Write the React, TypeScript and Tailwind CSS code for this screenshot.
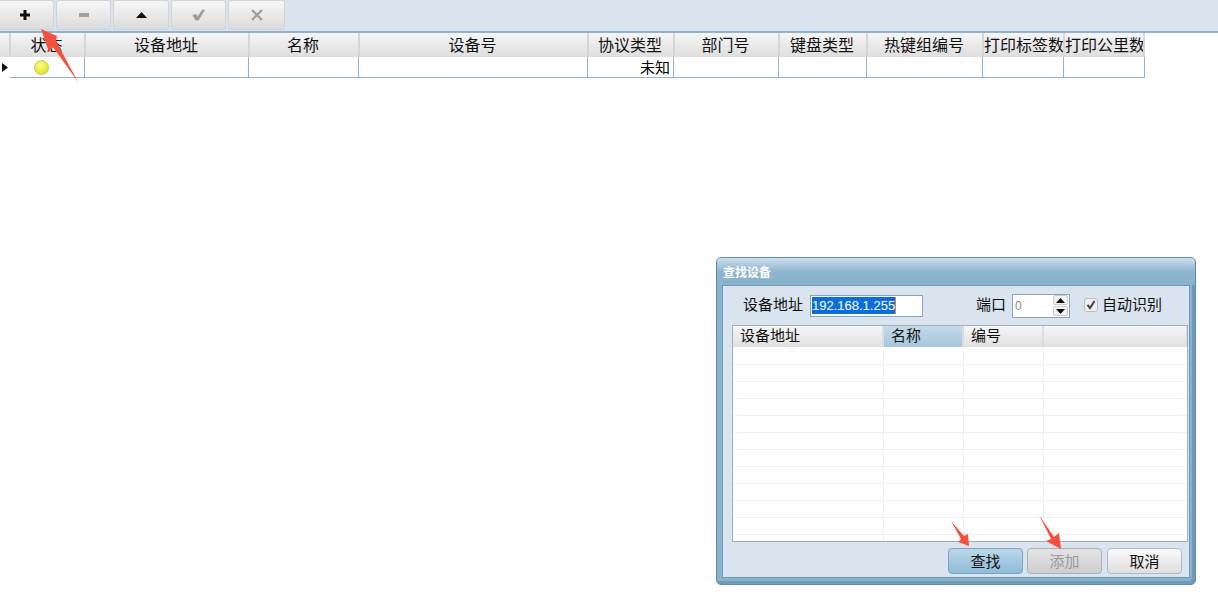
import React from "react";

const cols: [string, number][] = [
  ["状态", 75], ["设备地址", 164], ["名称", 110], ["设备号", 229], ["协议类型", 86],
  ["部门号", 105], ["键盘类型", 88], ["热键组编号", 116], ["打印标签数", 81], ["打印公里数", 81],
];
const font = { fontFamily: '"Noto Sans CJK SC", "Liberation Sans", sans-serif' };

function ToolBtn({ w, first, children }: { w: number; first?: boolean; children?: React.ReactNode }) {
  return (
    <div style={{ width: w }} className={(first ? "-ml-[4px] " : "") + "h-[30px] shrink-0 rounded-[3px] border border-[#d2d5d8] bg-gradient-to-b from-[#f6f6f6] to-[#dcdcdc] flex items-center justify-center"}>
      {children}
    </div>
  );
}

export default function App() {
  const gridCols = [151, 80, 80, 144];
  return (
    <div style={font} className="relative w-[1218px] h-[602px] bg-white overflow-hidden text-black">
      <div className="h-[33px] bg-[#d9e4ee] border-b-[2px] border-[#8fb4d0]">
        <div className="flex gap-[2px]">
          <ToolBtn w={58} first>
            <svg width="12" height="12" viewBox="0 0 12 12"><path d="M4.500 1h3v3.500h3.500v3h-3.500v3.500h-3v-3.500h-3.500v-3h3.500z" fill="#111" /></svg>
          </ToolBtn>
          <ToolBtn w={55}>
            <svg width="10" height="4" viewBox="0 0 10 4"><rect width="10" height="4" fill="#a0a0a0" /></svg>
          </ToolBtn>
          <ToolBtn w={56}>
            <svg width="11" height="6" viewBox="0 0 11 6"><path d="M5.500 0l5.500 6h-11z" fill="#111" /></svg>
          </ToolBtn>
          <ToolBtn w={55}>
            <svg width="13" height="12" viewBox="0 0 13 12"><path d="M0.500 6L4 5L5.500 7.500L10.500 0.500L13 1L6.500 11.500L3.500 11.500Z" fill="#9c9c9c" /></svg>
          </ToolBtn>
          <ToolBtn w={57}>
            <svg width="12" height="12" viewBox="0 0 12 12"><path d="M1 1l10 10m0-10l-10 10" stroke="#9c9c9c" strokeWidth="2.200" /></svg>
          </ToolBtn>
        </div>
      </div>

      <div className="flex h-[24px]">
        <div className="w-[11px] bg-gradient-to-b from-[#f6f6f6] to-[#dedede] border-r-2 border-[#d6d6d6]" />
        {cols.map(([t, w], i) => (
          <div key={t} style={{ width: i === 9 ? w - 1 : w }} className="shrink-0 pr-[2px] bg-gradient-to-b from-[#f6f6f6] to-[#dedede] border-r-2 border-[#d6d6d6] text-[16px] leading-[22px] text-center whitespace-nowrap overflow-hidden text-[#111]">
            {t}
          </div>
        ))}
      </div>
      <div className="flex h-[21px]">
        <div className="w-[10px] flex items-center pl-[2px]">
          <svg width="6" height="9" viewBox="0 0 6 9"><path d="M0 0l6 4.500-6 4.500z" fill="#111" /></svg>
        </div>
        {cols.map(([t, w], i) => (
          <div key={t} style={{ width: w }} className="shrink-0 box-border border-r border-b border-[#8fb4d0] first:border-l text-[15px] leading-[20px] whitespace-nowrap flex items-center justify-end pr-[3px]">
            {i === 0 && (
              <span className="ml-[24px] mr-auto w-[15px] h-[15px] rounded-full bg-[radial-gradient(circle_at_40%_35%,#f8fc80,#e4eb35_65%,#b0b42c)] border border-[#c4c75a]" />
            )}
            {i === 4 && "未知"}
          </div>
        ))}
      </div>

      {/* dialog */}
      <div className="absolute left-[716px] top-[257px] w-[480px] h-[328px] rounded-[5px] border border-[#5f8cae] bg-[#8ab2cc] shadow-[inset_-3px_-3px_0_#6f9aba] flex flex-col px-[5px] pb-[6px]">
        <div className="h-[27px] -mx-[5px] px-[6px] rounded-t-[4px] bg-gradient-to-b from-[#cfe0ec] via-[#8fb5ce] to-[#8ab2cc] text-white text-[12px] font-bold leading-[28px]">
          查找设备
        </div>
        <div className="flex-1 bg-[#d9e4ee] border border-[#6f9aba] flex flex-col pl-[9px] pr-[1px]">
          <div className="h-[39px] flex items-center text-[15px] text-[#111] shrink-0">
            <span className="ml-[11px] w-[67px] whitespace-nowrap mb-[3px]">设备地址</span>
            <div className="w-[113px] h-[22px] bg-white border border-[#8aa4b8] flex items-center pl-[1px]">
              <span className="bg-[#0a6fd8] text-white text-[13px] leading-[17px] border-r border-[#f08020]" style={{ fontFamily: '"Liberation Sans", sans-serif' }}>192.168.1.255</span>
            </div>
            <span className="ml-[53px] w-[36px] whitespace-nowrap mb-[3px]">端口</span>
            <div className="w-[58px] h-[24px] bg-white border border-[#8aa4b8] flex items-center justify-between pl-[2px] pr-[1px]">
              <span className="text-[12px] text-[#888]" style={{ fontFamily: '"Liberation Sans", sans-serif' }}>0</span>
              <div className="w-[15px] h-[21px] flex flex-col gap-px">
                <div className="flex-1 rounded-[2px] border border-[#ccc] bg-[#f2f2f2] flex items-center justify-center"><svg width="9" height="5" viewBox="0 0 9 5"><path d="M4.500 0l4.500 5h-9z" fill="#111" /></svg></div>
                <div className="flex-1 rounded-[2px] border border-[#ccc] bg-[#f2f2f2] flex items-center justify-center"><svg width="9" height="5" viewBox="0 0 9 5"><path d="M0 0h9l-4.500 5z" fill="#111" /></svg></div>
              </div>
            </div>
            <div className="ml-[14px] mb-[2px] w-[14px] h-[14px] rounded-[3px] border border-[#bbb] bg-[#eeeeee] flex items-center justify-center">
              <svg width="10" height="10" viewBox="0 0 10 10"><path d="M1.500 5l2.500 3 4.500-7" stroke="#444" strokeWidth="2" fill="none" /></svg>
            </div>
            <span className="ml-[5px] -translate-x-px whitespace-nowrap mb-[3px]">自动识别</span>
          </div>
          <div className="h-[217px] bg-white border border-[#9fb0bd] shrink-0 flex flex-col overflow-hidden">
            <div className="flex h-[21px] shrink-0">
              {["设备地址", "名称", "编号", ""].map((t, i) => (
                <div key={i} style={{ width: gridCols[i] }} className={"shrink-0 pl-[7px] text-[15px] leading-[18px] text-[#111] border-r-2 border-[#dcdcdc] " + (i === 1 ? "bg-gradient-to-b from-[#c4dbe9] to-[#a4c6da]" : "bg-gradient-to-b from-[#f6f6f6] to-[#e0e0e0]")}>
                  {t}
                </div>
              ))}
            </div>
            <div className="flex-1 pt-[1px] overflow-hidden">
              {Array.from({ length: 12 }).map((_, r) => (
                <div key={r} className="flex h-[17px]">
                  {gridCols.map((w, i) => (
                    <div key={i} style={{ width: w }} className="shrink-0 border-r border-b border-[#f0f0f0]" />
                  ))}
                </div>
              ))}
            </div>
          </div>
          <div className="flex-1 flex items-start justify-end gap-[4px] pt-[6px] pr-[6px] text-[15px] text-[#111]">
            <div className="w-[75px] h-[26px] rounded-[4px] border border-[#7ea6c2] bg-gradient-to-b from-[#bcd8e9] to-[#8fbbd8] text-center leading-[24px]">查找</div>
            <div className="w-[75px] h-[26px] rounded-[4px] border border-[#aab2b8] bg-gradient-to-b from-[#e4e4e4] to-[#cfcfcf] text-center leading-[24px] text-[#999]">添加</div>
            <div className="ml-[1px] w-[75px] h-[26px] rounded-[4px] border border-[#aebcc6] bg-gradient-to-b from-[#fafafa] to-[#dedede] text-center leading-[24px]">取消</div>
          </div>
        </div>
      </div>

      <svg className="absolute left-0 top-0 pointer-events-none" width="1218" height="602" viewBox="0 0 1218 602">
        <path d="M41 29L57 36L56 41L78 82L53 47L49 52Z" fill="#f5503c" />
        <path d="M951 521L964 536L968 534L969 546L958 542L961 539Z" fill="#f5503c" />
        <path d="M1039 515L1054 537L1059 533L1061 549L1046 541L1051 539Z" fill="#f5503c" />
      </svg>
    </div>
  );
}
